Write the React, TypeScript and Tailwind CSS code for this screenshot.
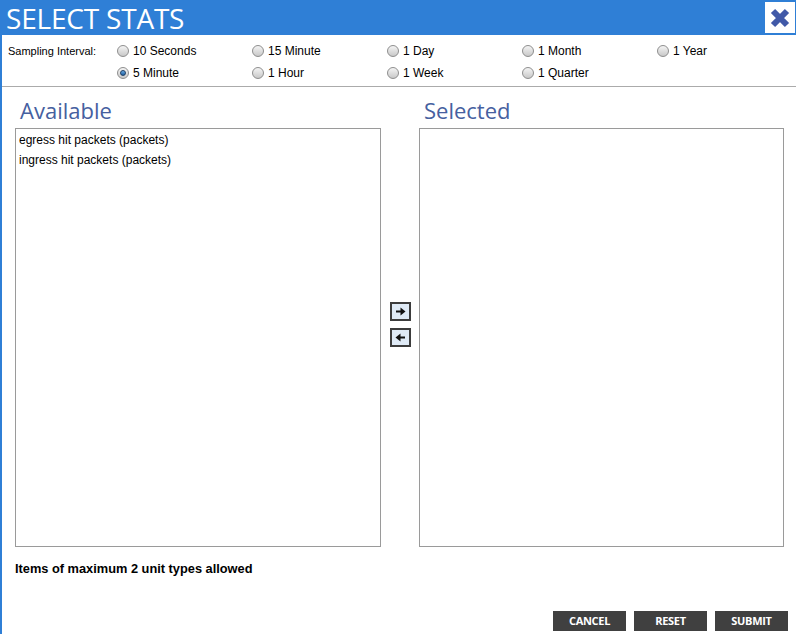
import React, { useState } from "react";

const intervals = [
  "10 Seconds",
  "15 Minute",
  "1 Day",
  "1 Month",
  "1 Year",
  "5 Minute",
  "1 Hour",
  "1 Week",
  "1 Quarter",
];

const Radio: React.FC<{ checked: boolean }> = ({ checked }) => (
  <span className="relative inline-flex h-[12px] w-[12px] shrink-0 items-center justify-center rounded-full border border-[#8e8e8e] bg-gradient-to-b from-[#f4f4f4] to-[#c9c9c9]">
    {checked && (
      <span className="h-[6px] w-[6px] rounded-full border border-[#1d3f66] bg-gradient-to-b from-[#6aaee8] to-[#1f5f9e]" />
    )}
  </span>
);

const ArrowBtn: React.FC<{ dir: "right" | "left" }> = ({ dir }) => (
  <button className="flex h-[19px] w-[21px] items-center justify-center border-2 border-[#3c3c3c] bg-[#dfeaf6]">
    <svg width="11" height="9" viewBox="0 0 11 9">
      {dir === "right" ? (
        <>
          <rect x="1" y="3.5" width="6" height="2" fill="#111" />
          <polygon points="5.5,0.5 10.5,4.5 5.5,8.5" fill="#111" />
        </>
      ) : (
        <>
          <rect x="4" y="3.5" width="6" height="2" fill="#111" />
          <polygon points="5.5,0.5 0.5,4.5 5.5,8.5" fill="#111" />
        </>
      )}
    </svg>
  </button>
);

export default function App() {
  const [interval, setInterval] = useState("5 Minute");
  const available = ["egress hit packets (packets)", "ingress hit packets (packets)"];

  return (
    <div
      className="flex h-[634px] w-[796px] flex-col border-l-2 border-[#2f7fd6] bg-white text-black"
      style={{ fontFamily: '"Liberation Sans", Arial, sans-serif' }}
    >
      {/* header */}
      <div className="flex h-[35px] shrink-0 items-center justify-between bg-[#2f7fd6] pl-[4px] pr-[1px]">
        <span
          className="text-[28px] font-medium leading-none tracking-[-0.2px] text-white"
          style={{ fontFamily: '"Open Sans", sans-serif' }}
        >
          SELECT STATS
        </span>
        <button className="flex h-[31px] w-[30px] items-center justify-center bg-white">
          <svg width="20" height="20" viewBox="0 0 20 20">
            <path d="M3 3 L17 17 M17 3 L3 17" stroke="#4159a8" strokeWidth="6" strokeLinecap="butt" />
          </svg>
        </button>
      </div>

      {/* sampling interval */}
      <div className="flex border-b border-[#ababab] pt-[5px] pb-[2px] pl-[6px]">
        <div className="w-[109px] shrink-0 pt-[4px] text-[11px] leading-[14px]">Sampling Interval:</div>
        <div className="grid grid-cols-[repeat(5,135px)]">
          {intervals.map((label) => (
            <label
              key={label}
              onClick={() => setInterval(label)}
              className="flex h-[22px] cursor-pointer items-center gap-[4px] text-[12px]"
            >
              <Radio checked={interval === label} />
              <span>{label}</span>
            </label>
          ))}
        </div>
      </div>

      {/* lists */}
      <div className="flex pl-[13px] pt-[10px]">
        <div className="flex w-[366px] flex-col">
          <h2
            className="mb-[4px] h-[27px] pl-[5px] text-[22px] leading-[27px] text-[#46609f]"
            style={{ fontFamily: '"Open Sans", sans-serif' }}
          >
            Available
          </h2>
          <div className="h-[419px] border border-[#9a9a9a] px-[3px] pt-[1px]">
            {available.map((a) => (
              <div key={a} className="h-[20px] text-[12px] leading-[20px]">
                {a}
              </div>
            ))}
          </div>
        </div>

        <div className="flex w-[38px] flex-col items-center justify-center gap-[7px] pt-[31px] pb-[26px]">
          <ArrowBtn dir="right" />
          <ArrowBtn dir="left" />
        </div>

        <div className="flex w-[365px] flex-col">
          <h2
            className="mb-[4px] h-[27px] pl-[5px] text-[22px] leading-[27px] text-[#46609f]"
            style={{ fontFamily: '"Open Sans", sans-serif' }}
          >
            Selected
          </h2>
          <div className="h-[419px] border border-[#9a9a9a]" />
        </div>
      </div>

      {/* note */}
      <div className="pl-[13px] pt-[15px] text-[12.8px] leading-[14px] font-bold">
        Items of maximum 2 unit types allowed
      </div>

      {/* footer buttons */}
      <div className="mt-auto flex justify-end gap-[8px] pr-[8px] pb-[3px]">
        {["CANCEL", "RESET", "SUBMIT"].map((b) => (
          <button
            key={b}
            className="h-[20px] w-[73px] bg-[#404040] text-[11px] font-bold tracking-[-0.3px] text-white"
            style={{ fontFamily: '"Open Sans", sans-serif' }}
          >
            {b}
          </button>
        ))}
      </div>
    </div>
  );
}
